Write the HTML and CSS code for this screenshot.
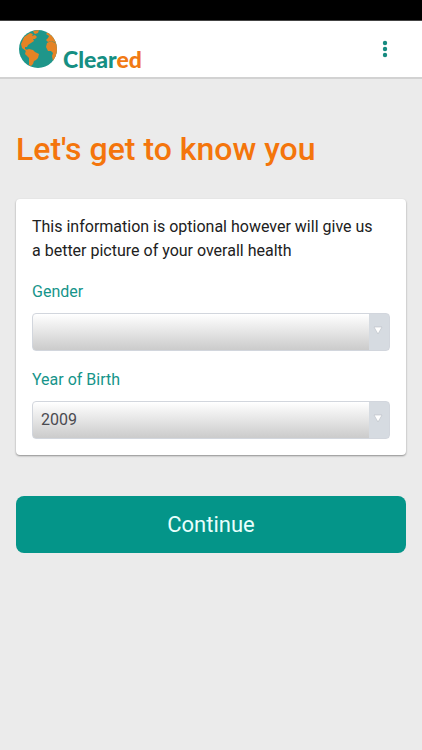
FILE: index.html
```html
<!DOCTYPE html>
<html lang="en">
<head>
<meta charset="utf-8">
<meta name="viewport" content="width=device-width, initial-scale=1">
<title>Cleared</title>
<link rel="stylesheet" href="styles.css">
</head>
<body>
<div class="status-bar"></div>
<header class="header">
  <a class="brand" href="#">
    <svg class="globe" viewBox="0 0 38 38" aria-hidden="true">
      <defs><clipPath id="disc"><circle cx="19" cy="19" r="19"/></clipPath></defs>
      <g clip-path="url(#disc)">
        <path fill="#1f968a" d="M0 0h38v38H0z"/>
        <g fill="#e58325">
          <path d="M3 12 5 7l6-4 3 1-1 2 3-1 2 2-2 2-2 0 1 2-3 2-3 2-1 2-2 0 0 2 2 1 1 1-2 0-4-3-1-4z"/>
          <path d="m14 1 6-1-1 3-3 1-1-1z"/>
          <path d="m7 20 3-1 4 1 2 2 4 2-1 4-2 2-2 1-1 3-2 2-2-1 0-7-4-4z"/>
          <path d="m27 4 2-2 9 8v4l-3-2-3-1-3 1-2-2 2-2 1-2z"/>
          <path d="m28 13 4-2 6 3v14l-4 3-1-5 1-3-2-2-3 0-2-4z"/>
        </g>
      </g>
    </svg>
    <span class="wordmark">Clear<span class="accent">ed</span></span>
  </a>
  <button class="menu" type="button" aria-label="Menu">
    <svg viewBox="0 0 6 18" aria-hidden="true"><g fill="#168b80"><circle cx="3" cy="3" r="2.2"/><circle cx="3" cy="9" r="2.2"/><circle cx="3" cy="15" r="2.2"/></g></svg>
  </button>
</header>
<main class="content">
  <h1 class="title">Let's get to know you</h1>
  <form>
    <section class="card">
      <p class="intro">This information is optional however will give us a better picture of your overall health</p>
      <div class="field">
        <label for="gender">Gender</label>
        <select id="gender"><option></option><option>Female</option><option>Male</option></select>
      </div>
      <div class="field">
        <label for="year">Year of Birth</label>
        <select id="year"><option>2009</option><option>2008</option><option>2007</option></select>
      </div>
    </section>
    <button class="continue" type="submit">Continue</button>
  </form>
</main>
</body>
</html>
```
FILE: styles.css
```css
* { box-sizing: border-box; }

body {
  margin: 0;
  background: #ebebeb;
  color: #212121;
  font: 16px/24px Roboto, sans-serif;
}

.status-bar {
  height: 21px;
  background: #000;
  border-bottom: 1px solid #444;
}

.header {
  display: flex;
  align-items: center;
  justify-content: space-between;
  height: 58px;
  padding: 0 28px 0 19px;
  background: #fff;
  border-bottom: 2px solid #d2d2d2;
}

.brand {
  display: flex;
  align-items: flex-end;
  gap: 6px;
  text-decoration: none;
}

.globe { width: 38px; height: 38px; }

.wordmark {
  padding-top: 20px;
  color: #168f83;
  font: 900 23px/18px Lato, sans-serif;
}

.accent { color: #f17a14; }

.menu {
  display: flex;
  padding: 0 6px;
  border: 0;
  background: none;
}

.menu svg { width: 6px; height: 18px; }

.content { padding: 48px 16px; }

.title {
  margin: 0 0 28px;
  color: #f4750c;
  font-size: 32px;
  font-weight: 500;
  line-height: 44px;
}

.card {
  padding: 16px;
  background: #fff;
  border-radius: 4px;
  box-shadow: 0 1px 2px rgba(0, 0, 0, 0.4);
}

.intro {
  margin: 0;
  padding-right: 8px;
}

.field {
  display: flex;
  flex-direction: column;
  gap: 9px;
  margin-top: 17px;
}

.field label { color: #16948a; }

.field select {
  width: 100%;
  height: 38px;
  padding: 0 32px 0 8px;
  appearance: none;
  border: 1px solid #d2d6dd;
  border-radius: 4px;
  color: #4a4a50;
  font: inherit;
  background:
    url("data:image/svg+xml,%3Csvg xmlns='http://www.w3.org/2000/svg' viewBox='0 0 20 36'%3E%3Cpath fill='%23d6dbe1' d='M0 0h20v36H0z'/%3E%3Cpath fill='%23fff' stroke='%23b9bec5' stroke-width='.6' d='M5 13h8l-4 7z'/%3E%3C/svg%3E") right / 20px 36px no-repeat,
    linear-gradient(#fff, #cbcbcb);
}

.continue {
  display: block;
  width: 100%;
  height: 57px;
  margin-top: 41px;
  border: 0;
  border-radius: 8px;
  background: #049589;
  color: #e8fffc;
  font: 22px/28px Roboto, sans-serif;
}
```
